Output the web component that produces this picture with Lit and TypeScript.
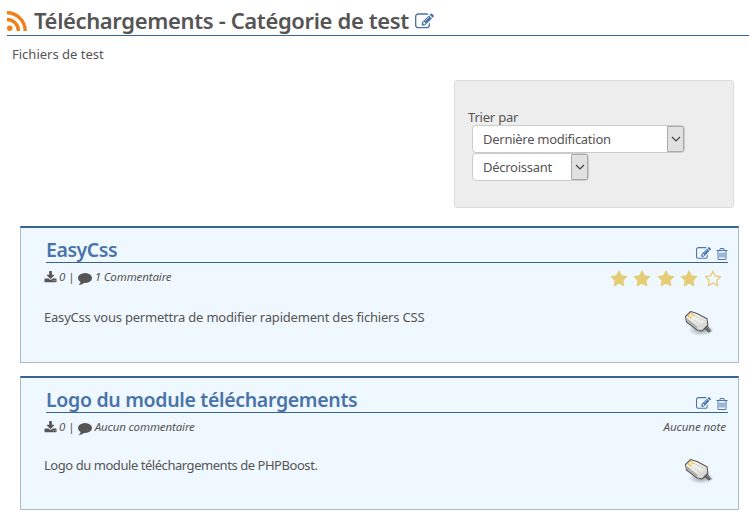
import { LitElement, html, css, svg } from "lit";
import { customElement, property } from "lit/decorators.js";

const ICONS: Record<string, string> = {
  edit: "M888 1184l116-116-152-152-116 116v56h96v96h56zm440-720q-16-16-33 1l-350 350q-17 17-1 33t33-1l350-350q17-17 1-33zm80 594v190q0 119-84.5 203.5t-203.5 84.5h-832q-119 0-203.5-84.5t-84.5-203.5v-832q0-119 84.5-203.5t203.5-84.5h832q63 0 117 25 15 7 18 23 3 17-9 29l-49 49q-14 14-32 8-23-6-45-6h-832q-66 0-113 47t-47 113v832q0 66 47 113t113 47h832q66 0 113-47t47-113v-126q0-13 9-22l64-64q15-15 35-7t20 29zm-96-738l288 288-672 672h-288v-288zm444 132l-92 92-288-288 92-92q28-28 68-28t68 28l152 152q28 28 28 68t-28 68z",
  trash: "M704 736v576q0 14-9 23t-23 9h-64q-14 0-23-9t-9-23v-576q0-14 9-23t23-9h64q14 0 23 9t9 23zm256 0v576q0 14-9 23t-23 9h-64q-14 0-23-9t-9-23v-576q0-14 9-23t23-9h64q14 0 23 9t9 23zm256 0v576q0 14-9 23t-23 9h-64q-14 0-23-9t-9-23v-576q0-14 9-23t23-9h64q14 0 23 9t9 23zm128 724v-948h-896v948q0 22 7 40.5t14.5 27 10.5 8.5h832q3 0 10.5-8.5t14.5-27 7-40.500zm-672-1076h448l-48-117q-7-9-17-11h-317q-10 2-17 11zm928 32v64q0 14-9 23t-23 9h-96v948q0 83-47 143.5t-113 60.5h-832q-66 0-113-58.5t-47-141.5v-952h-96q-14 0-23-9t-9-23v-64q0-14 9-23t23-9h309l70-167q15-37 54-63t79-26h320q40 0 79 26t54 63l70 167h309q14 0 23 9t9 23z",
  download: "M1344 1344q0-26-19-45t-45-19-45 19-19 45 19 45 45 19 45-19 19-45zm256 0q0-26-19-45t-45-19-45 19-19 45 19 45 45 19 45-19 19-45zm128-224v320q0 40-28 68t-68 28h-1472q-40 0-68-28t-28-68v-320q0-40 28-68t68-28h465l135 136q58 56 136 56t136-56l136-136h464q40 0 68 28t28 68zm-325-569q17 41-14 70l-448 448q-18 19-45 19t-45-19l-448-448q-31-29-14-70 17-39 59-39h256v-448q0-26 19-45t45-19h256q26 0 45 19t19 45v448h256q42 0 59 39z",
  comment: "M1792 896q0 174-120 321.5t-326 233-450 85.5q-70 0-145-8-198 175-460 242-49 14-114 22-17 2-30.5-9t-17.5-29v-1q-3-4-.5-12t2-10 4.5-9.5l6-9 7-8.5 8-9q7-8 31-34.5t34.5-38 31-39.5 32.5-51 27-59 26-76q-157-89-247.5-220t-90.5-281q0-130 71-248.5t191-204.5 286-136.5 348-50.5q244 0 450 85.5t326 233 120 321.5z",
  star: "M1728 647q0 22-26 48l-363 354 86 500q1 7 1 20 0 21-10.5 35.5t-30.5 14.5q-19 0-40-12l-449-236-449 236q-22 12-40 12-21 0-31.5-14.5t-10.5-35.5q0-6 2-20l86-500-364-354q-25-27-25-48 0-37 56-46l502-73 225-455q19-41 49-41t49 41l225 455 502 73q56 9 56 46z",
  starOpen: "M1201 1004l306-297-422-62-189-382-189 382-422 62 306 297-73 421 378-199 377 199zm527-357q0 22-26 48l-363 354 86 500q1 7 1 20 0 50-41 50-19 0-40-12l-449-236-449 236q-22 12-40 12-21 0-31.5-14.5t-10.5-35.5q0-6 2-20l86-500-364-354q-25-27-25-48 0-37 56-46l502-73 225-455q19-41 49-41t49 41l225 455 502 73q56 9 56 46z",
};

const icon = (name: string, cls: string) =>
  html`<svg class=${cls} viewBox="0 0 1792 1792" fill="currentColor">${svg`<path d=${ICONS[name]}></path>`}</svg>`;

@customElement("download-card")
class DownloadCard extends LitElement {
  @property() heading = "";
  @property() comments = "";
  @property() text = "";
  @property({ type: Number }) rating = 0;

  static styles = css`
    :host { display: block; box-sizing: border-box; background: #f0f8ff; border: 1px solid #aabccc; border-top: 2px solid #366493; padding: 10px 10px 0 23px; color: #555; font-variant-ligatures: none; }
    .head { display: flex; justify-content: space-between; height: 24px; margin-left: 2px; border-bottom: 1px solid #366493; color: #4974a9; }
    .title { font: 600 19.5px/24px "Noto Sans", sans-serif; letter-spacing: var(--title-spacing, 0); white-space: nowrap; margin: 0; }
    .tools { display: flex; gap: 4px; padding-top: 9px; }
    .edit { width: 15px; height: 15px; margin-top: -1px; }
    .trash { width: 14px; height: 14px; margin-right: -1px; }
    .meta { display: flex; justify-content: space-between; height: 29px; font: italic 11.5px/27px "Noto Sans", sans-serif; }
    .info { display: flex; align-items: flex-start; white-space: pre; }
    .down { width: 13px; height: 13px; margin: 8px 2px 0 0; }
    .bubble { width: 14px; height: 14px; margin: 8px 3px 0 3px; }
    .bar { font-style: normal; margin-left: 3px; }
    .label { letter-spacing: -.13px; }
    .note { margin-right: 2px; letter-spacing: -.05px; }
    .stars { display: flex; gap: 5.6px; padding: 7px 6px 0 0; color: #e5cd75; }
    .star { width: 18px; height: 18px; }
    .body { display: flex; justify-content: space-between; padding-right: 12px; font: 13px/20px "Noto Sans", sans-serif; }
    .text { padding-top: var(--text-offset, 15px); letter-spacing: var(--text-spacing, 0); }
    .thumb { width: 32px; height: 32px; margin-top: var(--thumb-offset, 18px); }
  `;

  render() {
    return html`
      <div class="head"><h2 class="title">${this.heading}</h2>
        <div class="tools">${icon("edit", "edit")}${icon("trash", "trash")}</div></div>
      <div class="meta">
        <div class="info">${icon("download", "down")}<span>0</span><span class="bar">|</span>${icon("comment", "bubble")}<span class="label">${this.comments}</span></div>
        ${this.rating
          ? html`<div class="stars">${[1, 2, 3, 4, 5].map((n) => icon(n <= this.rating ? "star" : "starOpen", "star"))}</div>`
          : html`<span class="note">Aucune note</span>`}
      </div>
      <div class="body"><span class="text">${this.text}</span>
        <svg class="thumb" viewBox="0 0 32 32">
          <defs>
            <radialGradient id="shade"><stop offset="0" stop-color="#34404a" stop-opacity=".5"></stop><stop offset="1" stop-color="#34404a" stop-opacity="0"></stop></radialGradient>
            <linearGradient id="shell" x1="0" y1="0" x2=".7" y2="1"><stop offset="0" stop-color="#fff"></stop><stop offset="1" stop-color="#dededa"></stop></linearGradient>
          </defs>
          <ellipse cx="17" cy="20" rx="13" ry="6" fill="url(#shade)"></ellipse>
          <path d="M20 15.500l4 .5 3.500 5-3 1.800-3-2.800-3-1z" fill="#686b6b"></path>
          <path d="M23 17l4.500 4" stroke="#999" stroke-width="1"></path>
          <path d="M1.500 6.500L6.700 1.500l6.300 2 10 5.300.9 6.200-6 6-5-1.200L2.500 12z" fill="url(#shell)" stroke="#555" stroke-width="1.100" stroke-linejoin="round"></path>
          <path d="M2.400 7.500l11 9v3L3 11.500z" fill="#b0b1af"></path>
          <path d="M13.500 16.500l9-5.500.6 3.500-5.300 5.700-4-1z" fill="#d8d9d5"></path>
          <path d="M11 5.800l10 5M9 9.300l7 5.500" stroke="#c9cac8" stroke-width=".8"></path>
          <path d="M4 6.800l1.500-1.300M6.700 4.500l1.400-1.200M6 8.300l1.500-1.300M8.700 6l1.400-1.200" stroke="#f1bf48" stroke-width="1.900"></path>
        </svg></div>`;
  }
}

@customElement("app-root")
class AppRoot extends LitElement {
  static styles = css`
    :host { display: block; height: 518px; overflow: hidden; background: #fff; color: #555; font: 13px/20px "Noto Sans", sans-serif; font-variant-ligatures: none; }
    .header { display: flex; align-items: flex-start; box-sizing: border-box; height: 36px; margin-left: 7px; border-bottom: 1px solid #366493; }
    .rss { width: 20px; height: 20px; margin: 11px 7px 0 0; }
    .page-title { width: 376px; margin: 4px 5px 0 0; font: 600 22px/32px "Noto Sans", sans-serif; letter-spacing: -.36px; white-space: nowrap; }
    .page-edit { width: 19px; height: 19px; margin-top: 12px; color: #4974a9; }
    .intro { margin: 8px 0 0 12px; height: 20px; }
    .sort { box-sizing: border-box; width: 280px; height: 128px; margin: 16px 15px 18px auto; padding: 28px 13px 0; background: #ededed; border: 1px solid #ddd; border-radius: 3px; }
    .sort-label { height: 16px; line-height: 16px; letter-spacing: -.2px; }
    .select { display: flex; box-sizing: border-box; height: 28px; margin-left: 4px; background: #fff; border: 1px solid #ccc; border-radius: 4px; line-height: 27px; letter-spacing: -.27px; }
    .wide { width: 213px; }
    .narrow { width: 117px; }
    .value { flex: 1; padding-left: 10px; }
    .arrow { display: flex; align-items: center; justify-content: center; width: 15px; background: #e1e1e1; border: 1px solid #aaa; border-radius: 0 2px 2px 0; }
    .chevron { width: 10px; height: 6px; }
    .card { margin: 0 10px 13px 20px; }
    .first { height: 137px; --text-spacing: -.2px; --title-spacing: -.45px; }
    .second { height: 134px; --text-offset: 13px; --thumb-offset: 16px; --text-spacing: -.45px; --title-spacing: -.32px; }
  `;

  select(label: string, size: string) {
    return html`<div class="select ${size}"><span class="value">${label}</span><span class="arrow">
      <svg class="chevron" viewBox="0 0 10 6" fill="none" stroke="#444" stroke-width="1.200"><path d="M1 1l4 4 4-4"></path></svg></span></div>`;
  }

  render() {
    return html`
      <div class="header">
        <svg class="rss" viewBox="0 0 20 20" fill="none" stroke="#f0811a"><circle cx="2.700" cy="17.300" r="2.700" fill="#f0811a" stroke="none"></circle><path d="M0 8.500A11.500 11.500 0 0 1 11.500 20M0 1.800A18.200 18.200 0 0 1 18.200 20" stroke-width="3.500"></path></svg>
        <h1 class="page-title">Téléchargements - Catégorie de test</h1>${icon("edit", "page-edit")}
      </div>
      <div class="intro">Fichiers de test</div>
      <div class="sort"><div class="sort-label">Trier par</div>
        ${this.select("Dernière modification", "wide")}${this.select("Décroissant", "narrow")}</div>
      <download-card class="card first" heading="EasyCss" comments="1 Commentaire" text="EasyCss vous permettra de modifier rapidement des fichiers CSS" rating="4"></download-card>
      <download-card class="card second" heading="Logo du module téléchargements" comments="Aucun commentaire" text="Logo du module téléchargements de PHPBoost."></download-card>`;
  }
}
